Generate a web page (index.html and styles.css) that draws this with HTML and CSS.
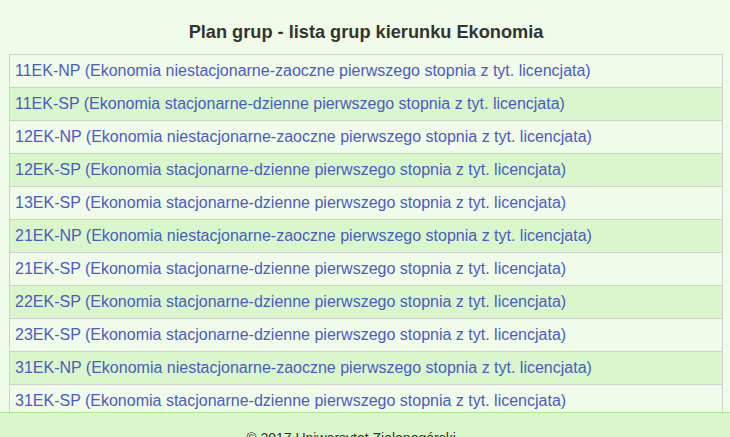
FILE: index.html
```html
<!DOCTYPE html>
<html lang="pl">
<head>
<meta charset="utf-8">
<title>Plan grup - lista grup kierunku Ekonomia</title>
<link rel="stylesheet" href="styles.css">
</head>
<body>
<main class="page">
  <h1 class="title">Plan grup - lista grup kierunku Ekonomia</h1>
  <table class="groups">
    <tbody>
      <tr><td><a href="#">11EK-NP (Ekonomia niestacjonarne-zaoczne pierwszego stopnia z tyt. licencjata)</a></td></tr>
      <tr><td><a href="#">11EK-SP (Ekonomia stacjonarne-dzienne pierwszego stopnia z tyt. licencjata)</a></td></tr>
      <tr><td><a href="#">12EK-NP (Ekonomia niestacjonarne-zaoczne pierwszego stopnia z tyt. licencjata)</a></td></tr>
      <tr><td><a href="#">12EK-SP (Ekonomia stacjonarne-dzienne pierwszego stopnia z tyt. licencjata)</a></td></tr>
      <tr><td><a href="#">13EK-SP (Ekonomia stacjonarne-dzienne pierwszego stopnia z tyt. licencjata)</a></td></tr>
      <tr><td><a href="#">21EK-NP (Ekonomia niestacjonarne-zaoczne pierwszego stopnia z tyt. licencjata)</a></td></tr>
      <tr><td><a href="#">21EK-SP (Ekonomia stacjonarne-dzienne pierwszego stopnia z tyt. licencjata)</a></td></tr>
      <tr><td><a href="#">22EK-SP (Ekonomia stacjonarne-dzienne pierwszego stopnia z tyt. licencjata)</a></td></tr>
      <tr><td><a href="#">23EK-SP (Ekonomia stacjonarne-dzienne pierwszego stopnia z tyt. licencjata)</a></td></tr>
      <tr><td><a href="#">31EK-NP (Ekonomia niestacjonarne-zaoczne pierwszego stopnia z tyt. licencjata)</a></td></tr>
      <tr><td><a href="#">31EK-SP (Ekonomia stacjonarne-dzienne pierwszego stopnia z tyt. licencjata)</a></td></tr>
    </tbody>
  </table>
</main>
<footer class="footer">© 2017 Uniwersytet Zielonogórski</footer>
</body>
</html>
```

FILE: styles.css
```css
html, body {
  margin: 0;
  padding: 0;
  background: #f0fbea;
  font-family: "Liberation Sans", Arial, sans-serif;
  color: #333;
}

.page {
  padding: 0 7px 60px 9px;
}

.title {
  margin: 0;
  padding: 21px 0 11px;
  font-size: 18.2px;
  line-height: 22px;
  font-weight: bold;
  text-align: center;
  color: #333;
}

.groups {
  width: 100%;
  border-collapse: collapse;
  border: 1px solid #cfcfcf;
}

.groups td {
  border-top: 1px solid #cfcfcf;
  padding: 0 5px;
  height: 32px;
  font-size: 16px;
  line-height: 20px;
}

.groups tr:nth-child(odd) td {
  background: #f0fbea;
}

.groups tr:nth-child(even) td {
  background: #d9f7ca;
}

.groups a {
  color: #4b5bc4;
  text-decoration: none;
}

.footer {
  position: fixed;
  left: 0;
  right: 0;
  top: 412px;
  height: 60px;
  border-top: 1px solid #a9e791;
  background: #d9f7ca;
  padding: 15px 28px 0 0;
  text-align: center;
  font-size: 14px;
  line-height: 20px;
  color: #333;
}
```
